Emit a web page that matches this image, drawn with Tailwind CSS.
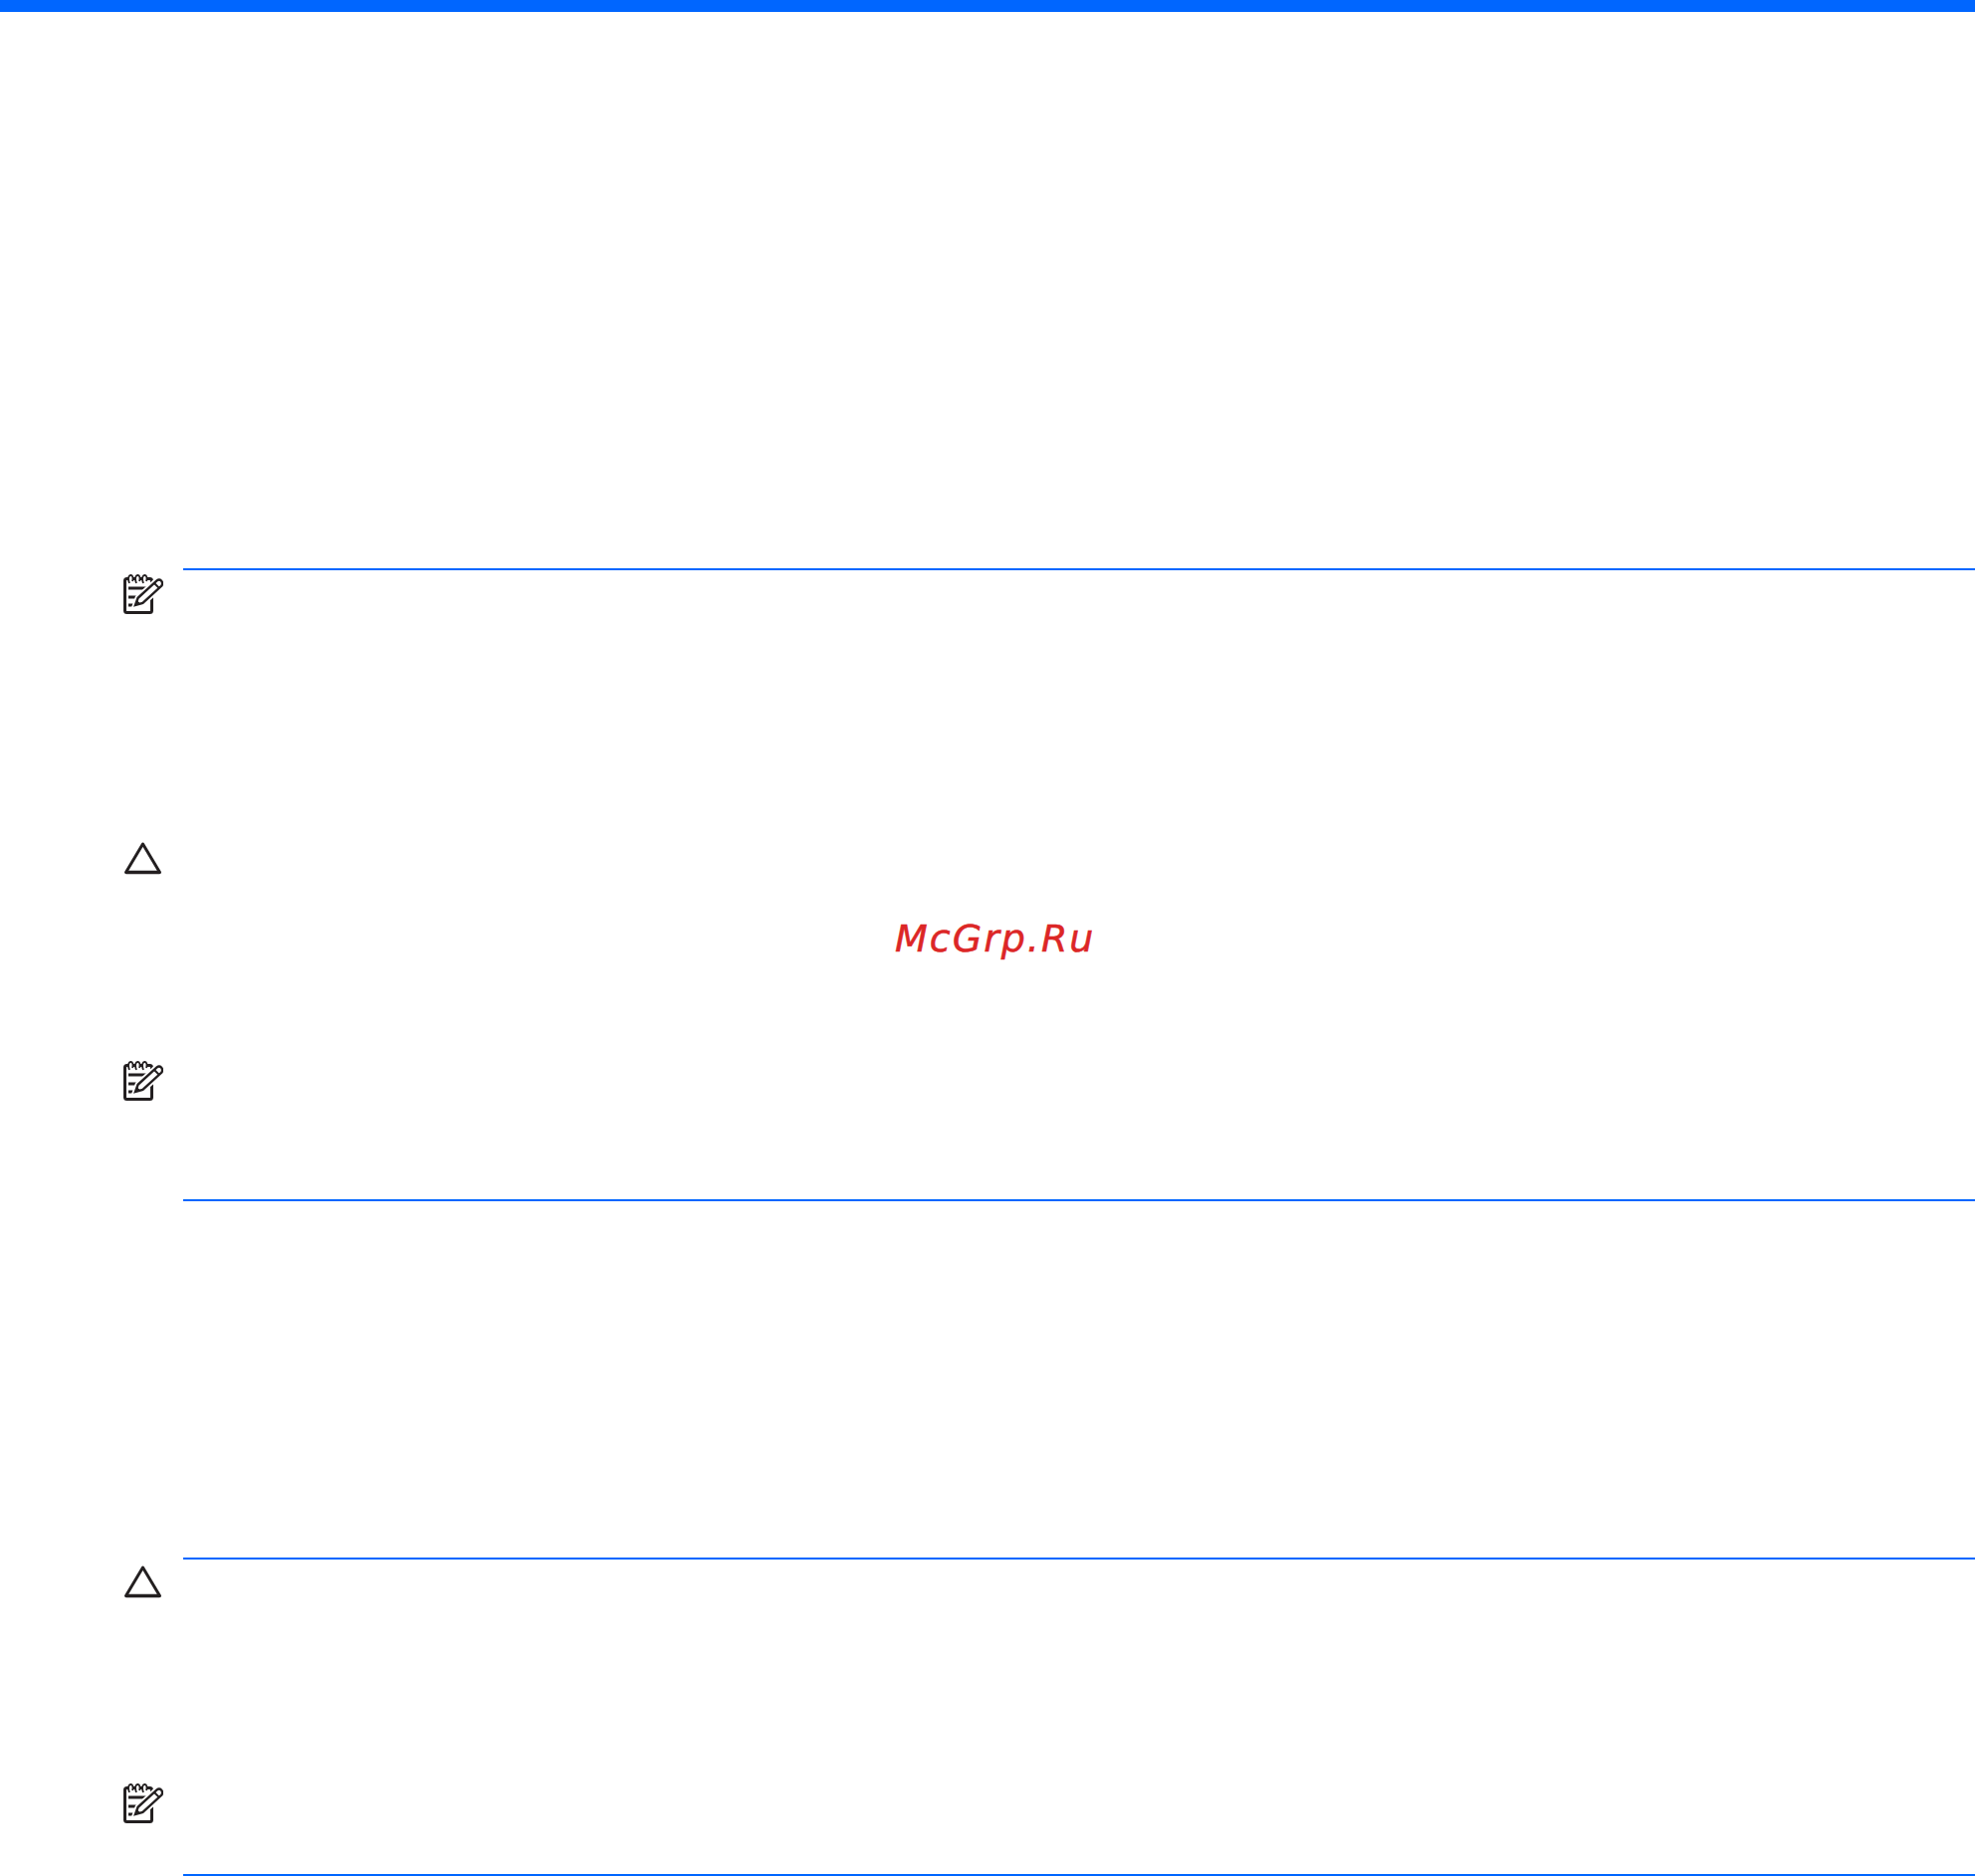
<!doctype html>
<html>
<head>
  <meta charset="utf-8"/>
  <meta name="viewport" content="width=device-width,initial-scale=1.0"/>
  <title>Page</title>
  <script src="https://cdn.jsdelivr.net/npm/@tailwindcss/browser@4"></script>
</head>
<body class="bg-white">
  <div class="relative w-[1984px] h-[1885px] overflow-hidden font-['Liberation_Sans',sans-serif]">
    <div class="h-[12px] bg-[#0066ff]"></div>

    <!-- First block: note, caution, note -->
    <section class="mt-[559px] h-[636px] ml-[124px] grid grid-cols-[60px_1fr]">
      <div class="flex flex-col pt-[6px]">
        <svg class="w-[40px] h-[40px]" viewBox="0 0 40 40" fill="none">
          <rect x="1.5" y="4.5" width="27" height="34" rx="2" stroke="#231f20" stroke-width="3"/>
          <path d="M6 9C4 4 5.5 .8 7.5 1C9.5 1.2 10 4 9 7M13 9C11 4 12.5 .8 14.5 1C16.5 1.2 17 4 16 7M20 9C18 4 19.5 .8 21.5 1C23.500 1.2 24 4 23 7" fill="#fff" stroke="#231f20" stroke-width="1.8"/>
          <path d="M5 14H24M5 23H16M5 31H11" stroke="#231f20" stroke-width="3"/>
          <path d="M12 31L14.600 23.800L33.600 6.400Q36 4.500 38 6.500Q40 9 38.400 11.600L19.400 29Z" fill="#fff" stroke="#fff" stroke-width="6"/>
          <path d="M12 31L14.600 23.800L33.600 6.400Q36 4.500 38 6.500Q40 9 38.400 11.600L19.400 29Z" fill="#fff" stroke="#231f20" stroke-width="2.400"/>
          <path d="M12 31L13.500 26.500L16.500 29.500Z" fill="#231f20" stroke="#231f20"/>
          <path d="M31 9L36 14" stroke="#231f20" stroke-width="2"/>
        </svg>
        <svg class="mt-[228px] w-[39px] h-[34px]" viewBox="0 0 39 34" fill="none">
          <path d="M19.500 3L2.500 31.500H36.500Z" stroke="#231f20" stroke-width="3" stroke-linejoin="round"/>
          <path d="M2.500 31.500H36.500" stroke="#231f20" stroke-width="3.600"/>
        </svg>
        <svg class="mt-[187px] w-[40px] h-[40px]" viewBox="0 0 40 40" fill="none">
          <rect x="1.5" y="4.5" width="27" height="34" rx="2" stroke="#231f20" stroke-width="3"/>
          <path d="M6 9C4 4 5.5 .8 7.5 1C9.5 1.2 10 4 9 7M13 9C11 4 12.5 .8 14.5 1C16.5 1.2 17 4 16 7M20 9C18 4 19.5 .8 21.5 1C23.500 1.2 24 4 23 7" fill="#fff" stroke="#231f20" stroke-width="1.8"/>
          <path d="M5 14H24M5 23H16M5 31H11" stroke="#231f20" stroke-width="3"/>
          <path d="M12 31L14.600 23.800L33.600 6.400Q36 4.500 38 6.500Q40 9 38.400 11.600L19.400 29Z" fill="#fff" stroke="#fff" stroke-width="6"/>
          <path d="M12 31L14.600 23.800L33.600 6.400Q36 4.500 38 6.500Q40 9 38.400 11.600L19.400 29Z" fill="#fff" stroke="#231f20" stroke-width="2.400"/>
          <path d="M12 31L13.500 26.500L16.500 29.500Z" fill="#231f20" stroke="#231f20"/>
          <path d="M31 9L36 14" stroke="#231f20" stroke-width="2"/>
        </svg>
      </div>
      <div class="border-y-2 border-[#0066ff]"></div>
    </section>

    <!-- Second block: caution, note -->
    <section class="mt-[358px] h-[320px] ml-[124px] grid grid-cols-[60px_1fr]">
      <div class="flex flex-col pt-[7px]">
        <svg class="w-[39px] h-[34px]" viewBox="0 0 39 34" fill="none">
          <path d="M19.500 3L2.500 31.500H36.500Z" stroke="#231f20" stroke-width="3" stroke-linejoin="round"/>
          <path d="M2.500 31.500H36.500" stroke="#231f20" stroke-width="3.600"/>
        </svg>
        <svg class="mt-[186px] w-[40px] h-[40px]" viewBox="0 0 40 40" fill="none">
          <rect x="1.5" y="4.5" width="27" height="34" rx="2" stroke="#231f20" stroke-width="3"/>
          <path d="M6 9C4 4 5.5 .8 7.5 1C9.5 1.2 10 4 9 7M13 9C11 4 12.5 .8 14.5 1C16.5 1.2 17 4 16 7M20 9C18 4 19.5 .8 21.5 1C23.500 1.2 24 4 23 7" fill="#fff" stroke="#231f20" stroke-width="1.8"/>
          <path d="M5 14H24M5 23H16M5 31H11" stroke="#231f20" stroke-width="3"/>
          <path d="M12 31L14.600 23.800L33.600 6.400Q36 4.500 38 6.500Q40 9 38.400 11.600L19.400 29Z" fill="#fff" stroke="#fff" stroke-width="6"/>
          <path d="M12 31L14.600 23.800L33.600 6.400Q36 4.500 38 6.500Q40 9 38.400 11.600L19.400 29Z" fill="#fff" stroke="#231f20" stroke-width="2.400"/>
          <path d="M12 31L13.500 26.500L16.500 29.500Z" fill="#231f20" stroke="#231f20"/>
          <path d="M31 9L36 14" stroke="#231f20" stroke-width="2"/>
        </svg>
      </div>
      <div class="border-y-2 border-[#0066ff]"></div>
    </section>

    <!-- Watermark lies over the page -->
    <div class="absolute left-[899px] top-[918px] font-['DejaVu_Sans',sans-serif] italic text-[38px] leading-[50px] tracking-[2px] text-[#dc2626] [-webkit-text-stroke:0.5px_#dc2626]">McGrp.Ru</div>
  </div>
</body>
</html>
